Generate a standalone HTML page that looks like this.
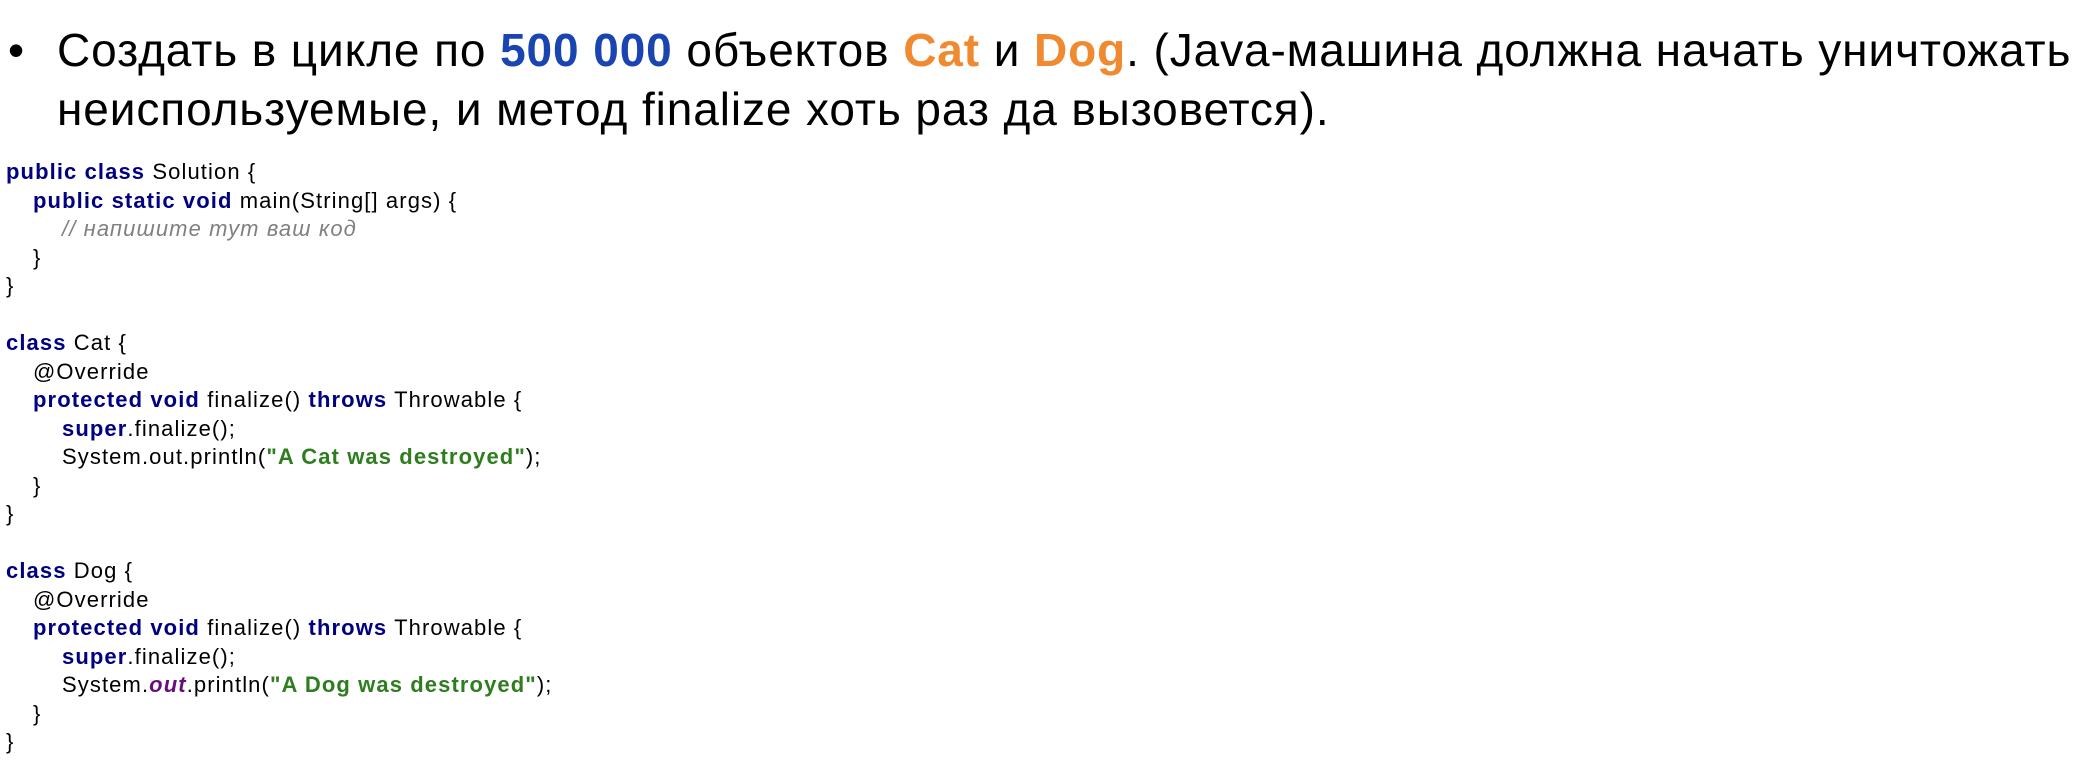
<!DOCTYPE html>
<html><head><meta charset="utf-8"><style>
html,body{margin:0;padding:0;background:#fff;width:2082px;height:776px;overflow:hidden}
.t{position:absolute;left:57px;font:46px "Liberation Sans",sans-serif;letter-spacing:0.9px;color:#000;white-space:nowrap;line-height:59px}
.b{position:absolute;left:8px;top:21px;font:46px "Liberation Sans",sans-serif;line-height:59px}
.blue{color:#1a44b0;font-weight:bold}.or{color:#f08a30;font-weight:bold}
.code{position:absolute;left:6px;top:158px;font:22px "Liberation Sans",sans-serif;letter-spacing:1.1px;line-height:28.5px;color:#000}
.code div{height:28.5px;white-space:pre}
.l1{padding-left:27px}.l2{padding-left:56px}
.k{color:#000080;font-weight:bold}.s{color:#2e7d1f;font-weight:bold}.c{color:#808080;font-style:italic}.o{color:#660e7a;font-weight:bold;font-style:italic}
</style></head><body>
<div class="b">•</div>
<div class="t" style="top:21px">Создать в цикле по <span class="blue">500 000</span> объектов <span class="or">Cat</span> и <span class="or">Dog</span>. (Java-машина должна начать уничтожать</div>
<div class="t" style="top:80px">неиспользуемые, и метод finalize хоть раз да вызовется).</div>
<div class="code"><div><span class="k">public class</span> Solution {</div><div class="l1"><span class="k">public static void</span> main(String[] args) {</div><div class="l2"><span class="c">// напишите тут ваш код</span></div><div class="l1">}</div><div>}</div><div></div><div><span class="k">class</span> Cat {</div><div class="l1">@Override</div><div class="l1"><span class="k">protected void</span> finalize() <span class="k">throws</span> Throwable {</div><div class="l2"><span class="k">super</span>.finalize();</div><div class="l2">System.out.println(<span class="s">"A Cat was destroyed"</span>);</div><div class="l1">}</div><div>}</div><div></div><div><span class="k">class</span> Dog {</div><div class="l1">@Override</div><div class="l1"><span class="k">protected void</span> finalize() <span class="k">throws</span> Throwable {</div><div class="l2"><span class="k">super</span>.finalize();</div><div class="l2">System.<span class="o">out</span>.println(<span class="s">"A Dog was destroyed"</span>);</div><div class="l1">}</div><div>}</div></div>
</body></html>
